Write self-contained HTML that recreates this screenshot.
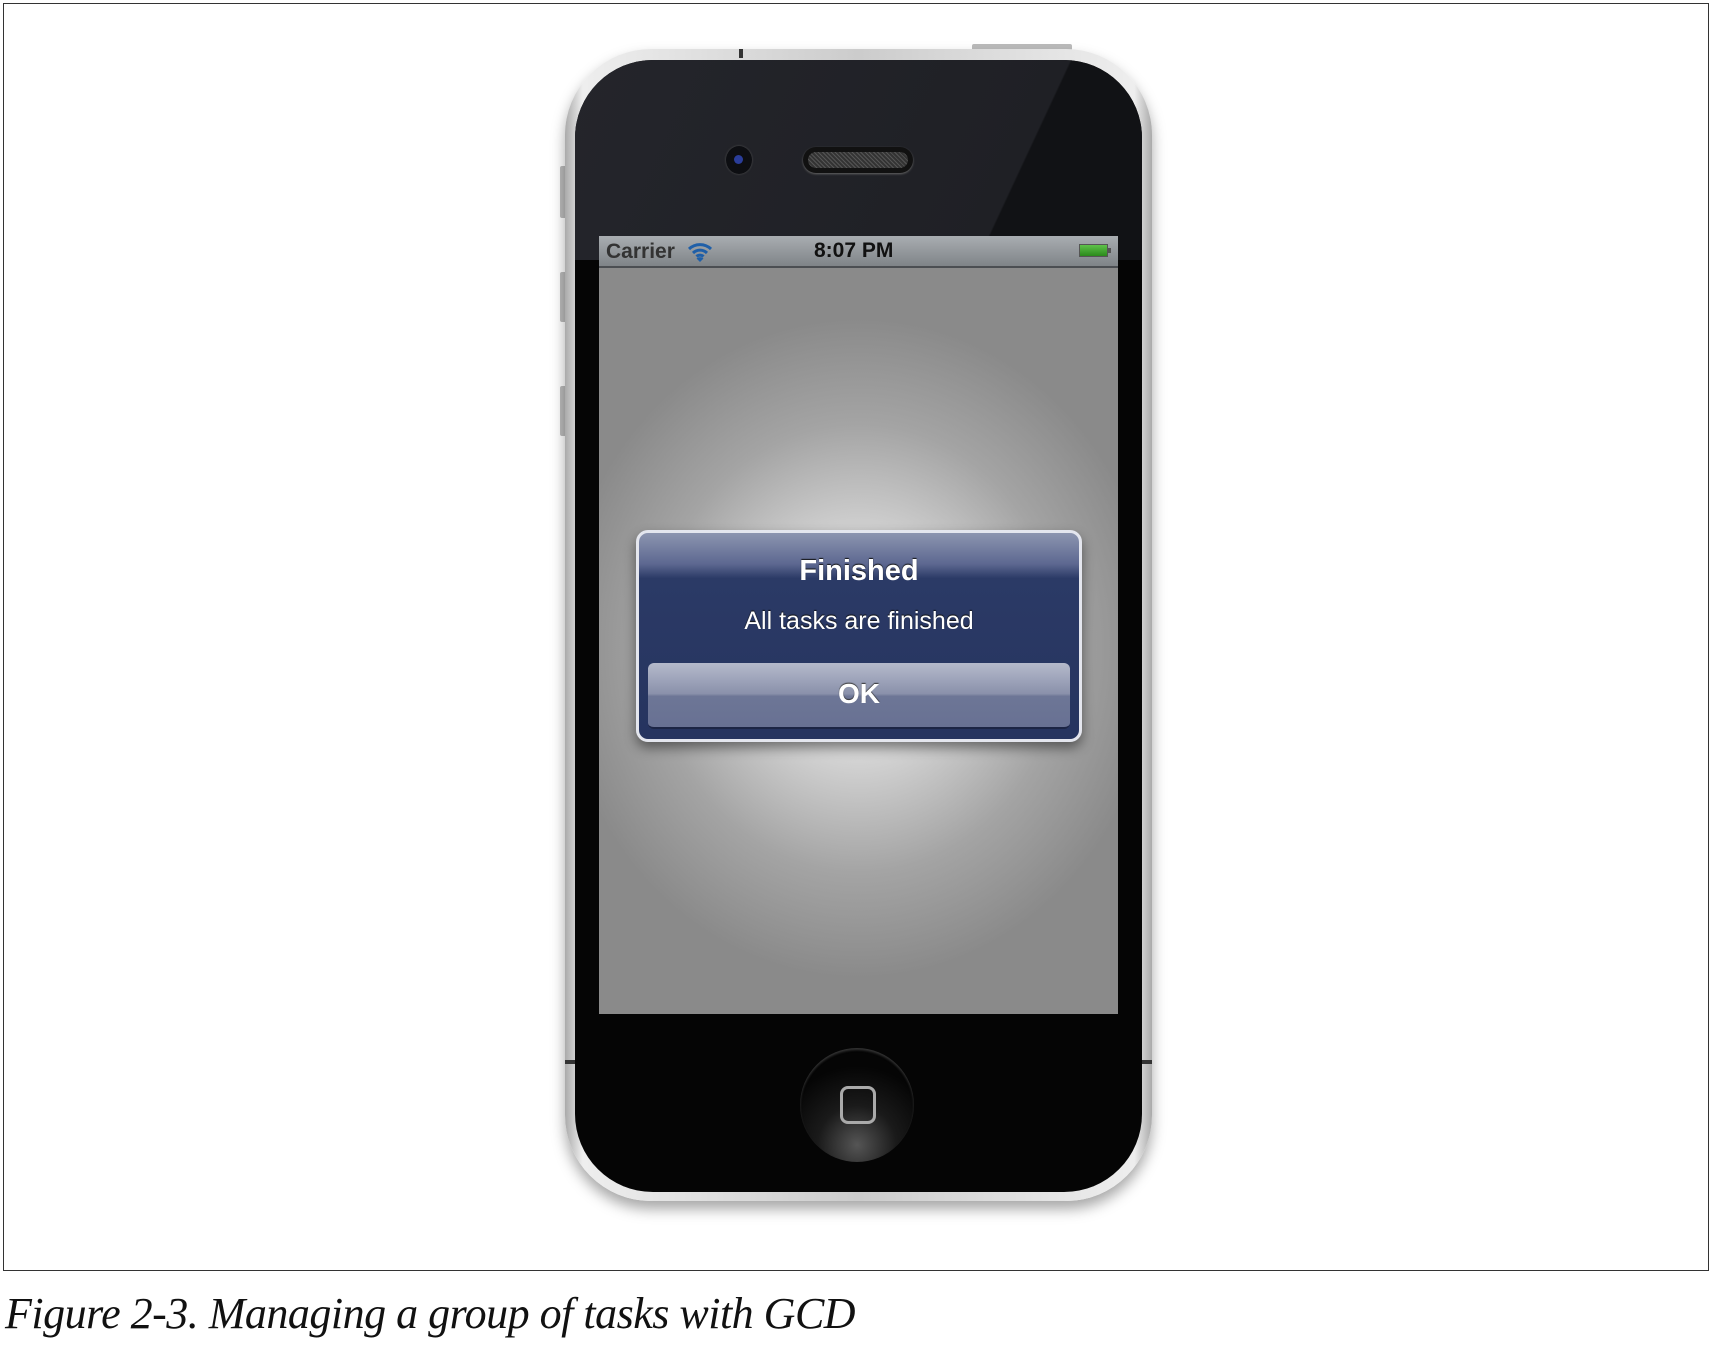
<!DOCTYPE html>
<html><head><meta charset="utf-8"><style>
*{margin:0;padding:0;box-sizing:border-box}
body{width:1712px;height:1348px;background:#fff;position:relative;overflow:hidden;font-family:"Liberation Sans",sans-serif}
.frame{position:absolute;left:3px;top:3px;width:1706px;height:1268px;border:1.5px solid #333}
.phone{position:absolute;left:565px;top:49px;width:587px;height:1152px;border-radius:86px;background:linear-gradient(90deg,#aaa,#eee 3%,#ccc 50%,#eee 97%,#aaa);box-shadow:0 8px 14px rgba(0,0,0,.35)}
.inner{position:absolute;left:10px;top:11px;width:567px;height:1132px;border-radius:78px;background:#050505;overflow:hidden}
.inner:before{content:"";position:absolute;left:0;top:0;width:100%;height:200px;background:linear-gradient(115deg,#24252b 0%,#1f2025 75%,#111215 75.3%)}
.btn{position:absolute;background:#bbb;border-radius:2px}
.screen{position:absolute;left:599px;top:236px;width:519px;height:778px;background:radial-gradient(ellipse 300px 330px at 50% 53%,#ffffff 0%,#d8d8d8 30%,#a4a4a4 68%,#8a8a8a 100%);overflow:hidden}
.status{position:absolute;left:0;top:0;width:100%;height:32px;background:linear-gradient(#a9adb1,#7f8488);border-bottom:2px solid #4b4e52;font-weight:bold;color:#222;font-size:21px}
.alert{position:absolute;left:636px;top:530px;width:446px;height:212px;border-radius:12px;border:3px solid #e4e6ee;background:linear-gradient(#8c95b0 0%,#5d6891 15%,#2b3a66 22%,#26345f 100%);box-shadow:0 6px 12px rgba(0,0,0,.45);color:#fff;text-align:center}
.ok{position:absolute;left:9px;top:130px;width:422px;height:66px;border-radius:6px;background:linear-gradient(#b5bacb 0%,#8a91ab 48%,#6d7696 52%,#687193 100%);border-bottom:2px solid #1c2545;font-weight:bold;font-size:28px;line-height:62px;text-shadow:0 -1px 1px #333}
.cap{position:absolute;left:5px;top:1288px;font-family:"Liberation Serif",serif;font-style:italic;font-size:44px;color:#111;letter-spacing:-0.5px}
</style></head><body>
<div class="frame"></div>
<div class="btn" style="left:560px;top:166px;width:7px;height:52px"></div>
<div class="btn" style="left:560px;top:272px;width:7px;height:50px"></div>
<div class="btn" style="left:560px;top:386px;width:7px;height:50px"></div>
<div class="btn" style="left:972px;top:44px;width:100px;height:7px"></div>
<div class="phone"><div class="inner"></div></div>
<div style="position:absolute;left:739px;top:49px;width:4px;height:9px;background:#333"></div>
<div style="position:absolute;left:565px;top:1060px;width:10px;height:4px;background:#333"></div>
<div style="position:absolute;left:1142px;top:1060px;width:10px;height:4px;background:#333"></div>
<div style="position:absolute;left:726px;top:146px;width:26px;height:28px;border-radius:50%;background:#0d0e12;box-shadow:0 0 2px #555"><div style="position:absolute;left:8px;top:9px;width:9px;height:9px;border-radius:50%;background:#2a3d9a"></div></div>
<div style="position:absolute;left:803px;top:147px;width:110px;height:26px;border-radius:13px;background:#111;box-shadow:0 1px 2px #666"><div style="position:absolute;left:5px;top:5px;width:100px;height:16px;border-radius:8px;background:repeating-linear-gradient(45deg,#555 0 1px,#333 1px 3px)"></div></div>
<div class="screen">
 <div class="status">
  <span style="position:absolute;left:7px;top:4px;color:#333">Carrier</span>
  <svg style="position:absolute;left:88px;top:6px" width="26" height="20" viewBox="0 0 26 20"><path d="M2 7A16 16 0 0 1 24 7M6 11A10 10 0 0 1 20 11M9.5 14.5A5 5 0 0 1 16.5 14.5" stroke="#1f5fa8" stroke-width="3" fill="none"/><path d="M13 20L9.5 16.5A5 5 0 0 1 16.5 16.5Z" fill="#1f5fa8"/></svg>
  <span style="position:absolute;left:215px;top:3px;color:#111">8:07 PM</span>
  <div style="position:absolute;left:480px;top:8px;width:29px;height:13px;border:1px solid #555;background:linear-gradient(#5fc24a,#2b8a1c)"></div>
  <div style="position:absolute;left:509px;top:12px;width:3px;height:5px;background:#555"></div>
 </div>
</div>
<div class="alert">
 <div style="position:absolute;left:0;width:100%;top:22px;font-size:29px;font-weight:bold;text-shadow:0 -1px 1px #111">Finished</div>
 <div style="position:absolute;left:0;width:100%;top:74px;font-size:25px;text-shadow:0 -1px 1px #111">All tasks are finished</div>
 <div class="ok">OK</div>
</div>
<div style="position:absolute;left:800px;top:1048px;width:114px;height:114px;border-radius:50%;background:radial-gradient(circle at 50% 85%,#555 0%,#1a1a1a 35%,#050505 70%);box-shadow:inset 0 2px 2px #333"></div>
<div style="position:absolute;left:840px;top:1086px;width:36px;height:38px;border:3px solid #aaa;border-radius:8px"></div>
<div class="cap">Figure 2-3. Managing a group of tasks with GCD</div>
</body></html>
